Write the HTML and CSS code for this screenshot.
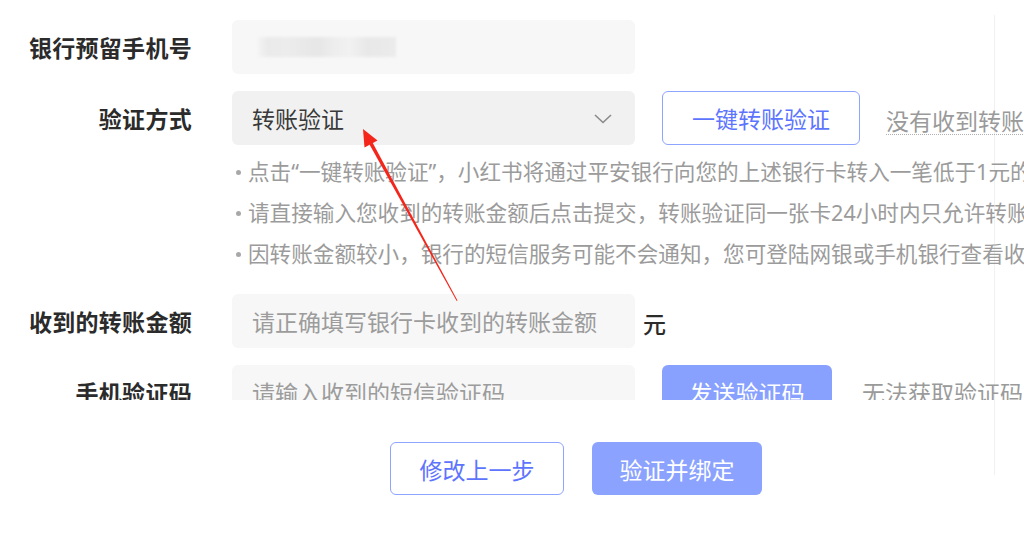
FILE: index.html
```html
<!DOCTYPE html>
<html lang="zh-CN">
<head>
<meta charset="utf-8">
<title>验证银行卡</title>
<link rel="stylesheet" href="styles.css">
</head>
<body>
<div class="panel">
  <div class="scroll">
    <div class="row">
      <div class="label">银行预留手机号</div>
      <div class="field field-light"><span class="masked"></span></div>
    </div>
    <div class="row">
      <div class="label">验证方式</div>
      <div class="field field-select">
        <span class="select-text">转账验证</span>
        <svg class="chevron" width="18" height="10" viewBox="0 0 18 10"><path d="M1 1 L9 8.5 L17 1" fill="none" stroke="#8a8a8a" stroke-width="1.6"/></svg>
      </div>
      <button class="btn-outline btn-transfer">一键转账验证</button>
      <span class="link">没有收到转账？</span>
    </div>
    <ul class="tips">
      <li>点击“一键转账验证”，小红书将通过平安银行向您的上述银行卡转入一笔低于1元的金额</li>
      <li>请直接输入您收到的转账金额后点击提交，转账验证同一张卡24小时内只允许转账3次</li>
      <li>因转账金额较小，银行的短信服务可能不会通知，您可登陆网银或手机银行查看收款记录</li>
    </ul>
    <div class="row row-amount">
      <div class="label">收到的转账金额</div>
      <div class="field field-light"><span class="placeholder">请正确填写银行卡收到的转账金额</span></div>
      <span class="unit">元</span>
    </div>
    <div class="row row-code">
      <div class="label">手机验证码</div>
      <div class="field field-light"><span class="placeholder">请输入收到的短信验证码</span></div>
      <button class="btn-fill btn-send">发送验证码</button>
      <span class="hint">无法获取验证码</span>
    </div>
  </div>
  <div class="footer">
    <button class="btn-outline btn-back">修改上一步</button>
    <button class="btn-fill btn-submit">验证并绑定</button>
  </div>
</div>
<svg class="arrow" width="1024" height="547" viewBox="0 0 1024 547">
  <polygon points="363,129 377.5,140.5 364.5,147.5" fill="#f4251b"/>
  <polygon points="372.5,142.5 369.5,144.5 456.7,301 457.5,300.6" fill="#f4251b"/>
</svg>
</body>
</html>
```

FILE: styles.css
```css
* { box-sizing: border-box; }
html, body {
  margin: 0;
  padding: 0;
  background: #ffffff;
  overflow: hidden;
  width: 1024px;
  height: 547px;
}
body {
  font-family: "Noto Sans CJK SC", "Noto Sans", sans-serif;
  color: #333333;
}
.panel {
  margin-top: 15px;
  width: 995px;
  height: 460px;
  border-right: 1px solid #f1f1f1;
}
.scroll {
  width: 1024px;
  height: 385px;
  padding-top: 5px;
  overflow: hidden;
}
.row {
  display: flex;
  align-items: center;
  height: 54px;
  margin-bottom: 17px;
  white-space: nowrap;
}
.label {
  width: 192px;
  margin-right: 40px;
  text-align: right;
  font-size: 23px;
  font-weight: 700;
  color: #2b2b2b;
  letter-spacing: 0.3px;
  flex-shrink: 0;
}
.field {
  width: 403px;
  height: 54px;
  border-radius: 6px;
  display: flex;
  align-items: center;
  padding-left: 20px;
  flex-shrink: 0;
}
.field-light { background: #f7f7f7; }
.field-select {
  background: #f1f1f1;
  justify-content: space-between;
  padding-right: 23px;
}
.masked {
  display: block;
  width: 138px;
  height: 20px;
  margin-left: 6px;
  background: linear-gradient(90deg, #f3f3f3 0, #eaeaea 10px, #ececec 30px, #e6e6e6 60px, #ededed 75px, #f1f1f1 92px, #e8e8e8 110px, #ebebeb 138px);
  filter: blur(1.5px);
}
.select-text {
  font-size: 23px;
  color: #3a3a3a;
}
.chevron { display: block; margin-top: 2px; }
.placeholder {
  font-size: 23px;
  color: #9c9c9c;
}
button {
  font-family: inherit;
  cursor: pointer;
}
.btn-outline {
  background: #ffffff;
  border: 1.5px solid #8ea4ff;
  border-radius: 6px;
  color: #5d74ff;
  font-size: 23px;
  padding: 0;
}
.btn-fill {
  background: #88a1ff;
  border: none;
  border-radius: 6px;
  color: #ffffff;
  font-size: 23px;
  padding: 0;
}
.btn-transfer {
  width: 198px;
  height: 54px;
  margin-left: 27px;
  flex-shrink: 0;
}
.link {
  margin-left: 26px;
  font-size: 23px;
  color: #9a9a9a;
  border-bottom: 1.5px dotted #b0b0b0;
  line-height: 28px;
  margin-top: 4px;
}
.tips {
  list-style: none;
  margin: -11px 0 20px 232px;
  padding: 0;
  white-space: nowrap;
}
.tips li {
  height: 41px;
  line-height: 41px;
  font-family: "Noto Sans", "Noto Sans CJK SC", sans-serif;
  font-size: 21.6px;
  color: #9b9b9b;
  padding-left: 16px;
  position: relative;
}
.tips li::before {
  content: "";
  position: absolute;
  left: 4px;
  top: 19px;
  width: 5px;
  height: 5px;
  border-radius: 50%;
  background: #a8a8a8;
}
.unit {
  margin-left: 8px;
  font-size: 23px;
  color: #2b2b2b;
  font-weight: 500;
  margin-top: 3px;
}
.btn-send {
  width: 170px;
  height: 54px;
  margin-left: 27px;
  flex-shrink: 0;
}
.hint {
  margin-left: 30px;
  font-size: 23px;
  color: #9a9a9a;
}
.footer {
  display: flex;
  gap: 28px;
  padding-left: 390px;
  margin-top: 42px;
}
.btn-back {
  width: 174px;
  height: 53px;
}
.btn-submit {
  width: 170px;
  height: 53px;
  background: #8ba3ff;
}
.arrow {
  position: absolute;
  left: 0;
  top: 0;
  pointer-events: none;
}
```
